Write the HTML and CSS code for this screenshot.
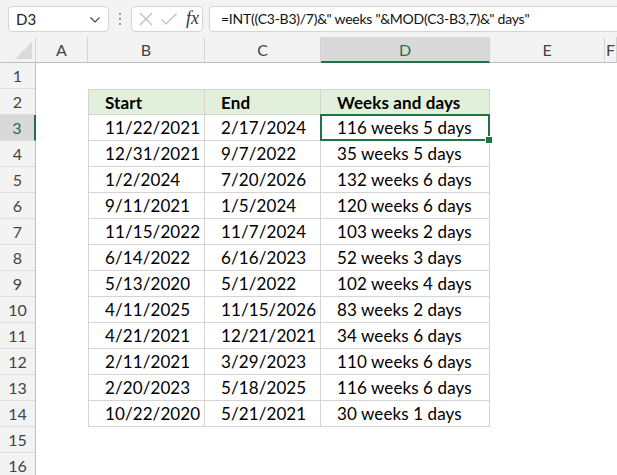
FILE: index.html
```html
<!DOCTYPE html>
<html>
<head>
<meta charset="utf-8">
<link rel="stylesheet" href="styles.css">
</head>
<body>
<div class="toolbar">
  <div class="namebox"><span>D3</span>
    <svg class="chev" width="12" height="8" viewBox="0 0 12 8"><path d="M1.5 1.5 L6 6 L10.5 1.5" fill="none" stroke="#444" stroke-width="1.2"/></svg>
  </div>
  <div class="dots"><i></i><i></i><i></i></div>
  <div class="btns">
    <svg width="16" height="16" viewBox="0 0 16 16"><path d="M2 2 L14 14 M14 2 L2 14" stroke="#bdbdbd" stroke-width="1.2"/></svg>
    <svg width="18" height="16" viewBox="0 0 18 16"><path d="M1.5 8.5 L6 13 L16.5 2.5" fill="none" stroke="#bdbdbd" stroke-width="1.2"/></svg>
    <span class="fx">fx</span>
  </div>
  <div class="formula">=INT((C3-B3)/7)&amp;" weeks "&amp;MOD(C3-B3,7)&amp;" days"</div>
</div>
<div class="sheet">
  <div class="corner"><svg width="17" height="17" viewBox="0 0 17 17"><path d="M17 0 L17 17 L0 17 Z" fill="#dadada"/></svg></div>
  <div class="ch">A</div><div class="ch">B</div><div class="ch">C</div><div class="ch csel">D</div><div class="ch">E</div><div class="ch">F</div>

  <div class="rh">1</div><div></div><div></div><div></div><div></div><div></div><div></div>

  <div class="rh">2</div><div></div><div class="t th tl tt">Start</div><div class="t th tt">End</div><div class="t th tt">Weeks and days</div><div></div><div></div>

  <div class="rh rsel">3</div><div></div><div class="t tl">11/22/2021</div><div class="t">2/17/2024</div><div class="t sel">116 weeks 5 days</div><div></div><div></div>
  <div class="rh">4</div><div></div><div class="t tl">12/31/2021</div><div class="t">9/7/2022</div><div class="t">35 weeks 5 days</div><div></div><div></div>
  <div class="rh">5</div><div></div><div class="t tl">1/2/2024</div><div class="t">7/20/2026</div><div class="t">132 weeks 6 days</div><div></div><div></div>
  <div class="rh">6</div><div></div><div class="t tl">9/11/2021</div><div class="t">1/5/2024</div><div class="t">120 weeks 6 days</div><div></div><div></div>
  <div class="rh">7</div><div></div><div class="t tl">11/15/2022</div><div class="t">11/7/2024</div><div class="t">103 weeks 2 days</div><div></div><div></div>
  <div class="rh">8</div><div></div><div class="t tl">6/14/2022</div><div class="t">6/16/2023</div><div class="t">52 weeks 3 days</div><div></div><div></div>
  <div class="rh">9</div><div></div><div class="t tl">5/13/2020</div><div class="t">5/1/2022</div><div class="t">102 weeks 4 days</div><div></div><div></div>
  <div class="rh">10</div><div></div><div class="t tl">4/11/2025</div><div class="t">11/15/2026</div><div class="t">83 weeks 2 days</div><div></div><div></div>
  <div class="rh">11</div><div></div><div class="t tl">4/21/2021</div><div class="t">12/21/2021</div><div class="t">34 weeks 6 days</div><div></div><div></div>
  <div class="rh">12</div><div></div><div class="t tl">2/11/2021</div><div class="t">3/29/2023</div><div class="t">110 weeks 6 days</div><div></div><div></div>
  <div class="rh">13</div><div></div><div class="t tl">2/20/2023</div><div class="t">5/18/2025</div><div class="t">116 weeks 6 days</div><div></div><div></div>
  <div class="rh">14</div><div></div><div class="t tl">10/22/2020</div><div class="t">5/21/2021</div><div class="t">30 weeks 1 days</div><div></div><div></div>
  <div class="rh">15</div><div></div><div></div><div></div><div></div><div></div><div></div>
  <div class="rh">16</div><div></div><div></div><div></div><div></div><div></div><div></div>
</div>
</body>
</html>
```
FILE: styles.css
```css
* { box-sizing: border-box; }
html, body { margin: 0; padding: 0; }
body {
  width: 617px;
  height: 475px;
  overflow: hidden;
  background: #fff;
  font-family: Lato, "Noto Sans", sans-serif;
  color: #000;
}
.toolbar {
  height: 37px;
  background: #f3f3f3;
  display: flex;
  align-items: flex-start;
  padding: 6px 0 0 8px;
}
.namebox {
  width: 101px;
  height: 26px;
  background: #fff;
  border: 1px solid #d4d4d4;
  border-radius: 4px;
  display: flex;
  align-items: center;
  justify-content: space-between;
  padding: 0 7px 0 7px;
  font-size: 15px;
  color: #222;
}
.chev { margin-top: 1px; }
.dots {
  width: 22px;
  height: 26px;
  display: flex;
  flex-direction: column;
  align-items: center;
  justify-content: center;
  gap: 3px;
}
.dots i { width: 2px; height: 2px; background: #9a9a9a; display: block; }
.btns {
  width: 72px;
  height: 26px;
  background: #fff;
  border: 1px solid #d4d4d4;
  border-radius: 4px;
  display: flex;
  align-items: center;
  gap: 6px;
  padding: 0 0 0 6px;
}
.fx {
  font-family: "Liberation Serif", serif;
  font-style: italic;
  font-size: 18px;
  color: #333;
  margin-left: 2px;
  margin-top: -2px;
}
.formula {
  flex: 1;
  height: 26px;
  margin-left: 6px;
  margin-right: -6px;
  background: #fff;
  border: 1px solid #d4d4d4;
  border-radius: 4px;
  font-size: 14px;
  letter-spacing: -0.25px;
  line-height: 24px;
  padding-left: 11px;
  color: #111;
  white-space: nowrap;
}
.sheet {
  display: grid;
  grid-template-columns: 36px 52px 117px 116px 169px 115px 1fr;
  grid-auto-rows: 26px;
}
.sheet > div { display: flex; align-items: center; }
.corner {
  background: #f3f3f3;
  border-right: 1px solid #d4d4d4;
  border-bottom: 1px solid #bdbdbd;
  justify-content: flex-end;
  align-items: flex-end !important;
  padding: 0 3px 3px 0;
}
.ch {
  background: #f3f3f3;
  border-right: 1px solid #d4d4d4;
  border-bottom: 1px solid #bdbdbd;
  justify-content: center;
  font-size: 16px;
  color: #444;
}
.csel {
  background: #d9d9d9;
  color: #217346;
  border-bottom: 2px solid #217346;
}
.rh {
  background: #f3f3f3;
  border-right: 1px solid #bdbdbd;
  border-bottom: 1px solid #dcdcdc;
  justify-content: center;
  font-size: 16px;
  color: #444;
}
.rsel {
  background: #d9d9d9;
  color: #217346;
  border-right: 2px solid #217346;
}
.t {
  border-right: 1px solid #d4d4d4;
  border-bottom: 1px solid #d4d4d4;
  padding-left: 16px;
  font-size: 17px;
  letter-spacing: 0.1px;
  white-space: nowrap;
}
.tl { border-left: 1px solid #d4d4d4; }
.tt { border-top: 1px solid #d4d4d4; }
.th {
  background: #e2efda;
  font-weight: bold;
}
.sel { position: relative; }
.sel::after {
  content: "";
  position: absolute;
  left: -1px;
  top: -1px;
  right: -1px;
  bottom: -1px;
  border: 2px solid #217346;
}
.sel::before {
  content: "";
  position: absolute;
  right: -4px;
  bottom: -4px;
  width: 6px;
  height: 6px;
  background: #217346;
  border: 1px solid #fff;
  z-index: 2;
}
```
